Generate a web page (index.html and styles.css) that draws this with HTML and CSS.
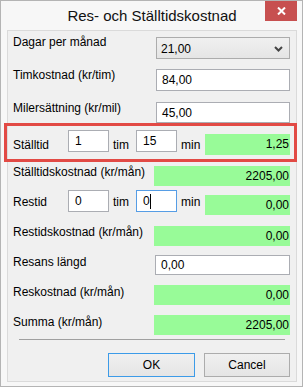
FILE: index.html
```html
<!DOCTYPE html>
<html lang="sv">

<head>
    <meta charset="UTF-8">
    <meta name="viewport" content="width=device-width, initial-scale=1.0">
    <title>Res- och Ställtidskostnad</title>
    <link rel="stylesheet" href="styles.css">
</head>

<body>
    <div class="window">
        <div class="titlebar">
            <span class="title">Res- och Ställtidskostnad</span>
            <div class="close">
                <svg width="9" height="8" viewBox="0 0 9 8">
                    <path d="M1 0.5 L8 7.5 M8 0.5 L1 7.5" stroke="#fff" stroke-width="2" fill="none" />
                </svg>
            </div>
        </div>

        <div class="panel">
            <!-- top fields -->
            <div class="row row-days">
                <span class="label up2">Dagar per månad</span>
                <div class="combo">
                    <span>21,00</span>
                    <svg width="9" height="6" viewBox="0 0 9 6">
                        <polyline points="1,1 4.5,4.5 8,1" stroke="#444" stroke-width="2" fill="none" />
                    </svg>
                </div>
            </div>

            <div class="row row-hour">
                <span class="label up1">Timkostnad (kr/tim)</span>
                <div class="input wide h22">84,00</div>
            </div>

            <div class="row row-mile">
                <span class="label up1">Milersättning (kr/mil)</span>
                <div class="input wide h21">45,00</div>
            </div>

            <!-- highlighted row -->
            <div class="time-row marked">
                <span class="label short down4">Ställtid</span>
                <div class="input small">1</div>
                <span class="unit">tim</span>
                <div class="input small">15</div>
                <span class="unit">min</span>
                <div class="result narrow">1,25</div>
            </div>

            <div class="row row-setupcost">
                <span class="label up1">Ställtidskostnad (kr/mån)</span>
                <div class="result">2205,00</div>
            </div>

            <div class="time-row row-travel">
                <span class="label short down5">Restid</span>
                <div class="input small">0</div>
                <span class="unit">tim</span>
                <div class="input small focus">0<span class="caret"></span></div>
                <span class="unit">min</span>
                <div class="result narrow">0,00</div>
            </div>

            <div class="row row-travelcost">
                <span class="label up1">Restidskostnad (kr/mån)</span>
                <div class="result">0,00</div>
            </div>

            <div class="row row-length">
                <span class="label">Resans längd</span>
                <div class="input wide h20 len">0,00</div>
            </div>

            <div class="row row-tripcost">
                <span class="label">Reskostnad (kr/mån)</span>
                <div class="result">0,00</div>
            </div>

            <div class="row row-sum">
                <span class="label">Summa (kr/mån)</span>
                <div class="result">2205,00</div>
            </div>

            <div class="separator"></div>

            <div class="buttons">
                <div class="button default">OK</div>
                <div class="button cancel">Cancel</div>
            </div>
        </div>
    </div>
</body>

</html>
```

FILE: styles.css
```css
* {
    margin: 0;
    padding: 0;
    box-sizing: border-box;
}

body,
html {
    height: 100%;
    font-family: "Liberation Sans", Arial, sans-serif;
    font-size: 12px;
    color: #000;
    background: #fff;
    overflow: hidden;
}

.window {
    position: relative;
    width: 303px;
    height: 387px;
    border: 1px solid #b4b4b4;
    background: #f7f7f7;
    padding: 0 5px 4px 6px;
}

.titlebar {
    height: 29px;
    text-align: center;
}

.title {
    font-size: 15px;
    line-height: 29px;
    color: #111;
}

.close {
    position: absolute;
    top: 0;
    right: 5px;
    width: 32px;
    height: 20px;
    background: #c75050;
    display: flex;
    align-items: center;
    justify-content: center;
}

.panel {
    height: 352px;
    border: 1px solid #dadada;
    background: #f0f0f0;
    padding: 6px 6px 4px 5px;
    display: flex;
    flex-direction: column;
}

/* rows */
.row {
    display: flex;
    align-items: flex-start;
    justify-content: space-between;
}

.row-hour {
    margin-top: 10px;
}

.row-mile {
    margin-top: 11px;
}

.row-setupcost {
    margin-top: 4px;
}

.row-travel {
    margin-top: 4px;
}

.row-travelcost {
    margin-top: 11px;
}

.row-length {
    margin-top: 9px;
}

.row-tripcost,
.row-sum {
    margin-top: 10px;
}

.label {
    line-height: 15px;
    white-space: nowrap;
}

.up1 {
    margin-top: -1px;
}

.up2 {
    margin-top: -2px;
}

.down4 {
    margin-top: 8px;
}

.down5 {
    margin-top: 5px;
}

.short {
    width: 55px;
}

/* fields */
.combo {
    width: 134px;
    height: 22px;
    border: 1px solid #acacac;
    background: linear-gradient(#f0f0f0, #e5e5e5);
    display: flex;
    align-items: center;
    justify-content: space-between;
    padding: 1px 6px 0 4px;
}

.input {
    background: #fff;
    border: 1px solid #abadb3;
    padding-left: 5px;
    display: flex;
    align-items: center;
}

.wide {
    width: 134px;
}

.len {
    width: 135px;
}

.h22 {
    height: 22px;
}

.h21 {
    height: 21px;
}

.h20 {
    height: 20px;
}

.small {
    width: 41px;
    height: 22px;
    padding-left: 6px;
    align-items: flex-start;
    padding-top: 3px;
}

.focus {
    border-color: #569de5;
}

.caret {
    display: inline-block;
    width: 1px;
    height: 15px;
    background: #000;
}

.result {
    width: 136px;
    height: 20px;
    background: #98fb98;
    text-align: right;
    line-height: 20px;
    padding-right: 1px;
}

.narrow {
    width: 85px;
    margin-top: 5px;
}

/* time rows: Ställtid / Restid */
.time-row {
    display: flex;
    align-items: flex-start;
}

.unit {
    width: 27px;
    padding-left: 4px;
    line-height: 15px;
    margin-top: 8px;
}

.unit + .input + .unit {
    width: 28px;
}

.row-travel .unit {
    margin-top: 5px;
}

.marked {
    height: 39px;
    margin: 0 -7px 0 -9px;
    border: 3px solid #e24a45;
    padding: 4px 4px 0 6px;
}

.marked .narrow {
    margin-top: 4px;
    height: 21px;
}

/* bottom */
.separator {
    height: 1px;
    margin: 4px 5px 0 6px;
    background: #a0a0a0;
}

.buttons {
    display: flex;
    justify-content: flex-end;
    gap: 9px;
    margin-top: 13px;
}

.button {
    height: 24px;
    border: 1px solid #acacac;
    background: linear-gradient(#f0f0f0, #e5e5e5);
    display: flex;
    align-items: center;
    justify-content: center;
    width: 86px;
}

.default {
    width: 87px;
    border-color: #3c9be8;
}
```
